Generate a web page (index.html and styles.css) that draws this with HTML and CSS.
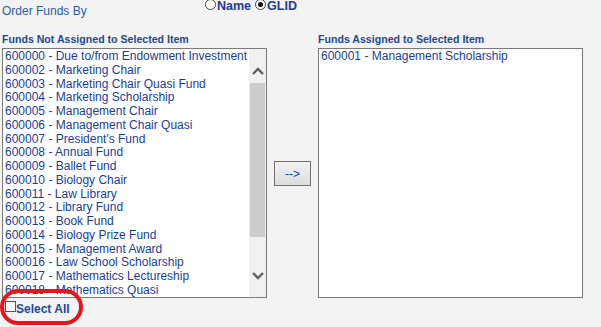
FILE: index.html
```
<!DOCTYPE html>
<html lang="en">

<head>
    <meta charset="UTF-8">
    <title>Fund Assignment</title>
    <link rel="stylesheet" href="styles.css">
</head>

<body>
    <div class="page">
        <div class="order-row">
            <span class="order-label">Order Funds By</span>
            <span class="order-opts">
                <label class="opt"><i class="radio"></i>Name</label>
                <label class="opt"><i class="radio on"></i>GLID</label>
            </span>
        </div>

        <div class="funds">
            <!-- 未分配 -->
            <div class="col">
                <div class="col-title">Funds Not Assigned to Selected Item</div>
                <div class="listbox">
                    <ul class="options">
                        <li>600000 - Due to/from Endowment Investment</li>
                        <li>600002 - Marketing Chair</li>
                        <li>600003 - Marketing Chair Quasi Fund</li>
                        <li>600004 - Marketing Scholarship</li>
                        <li>600005 - Management Chair</li>
                        <li>600006 - Management Chair Quasi</li>
                        <li>600007 - President's Fund</li>
                        <li>600008 - Annual Fund</li>
                        <li>600009 - Ballet Fund</li>
                        <li>600010 - Biology Chair</li>
                        <li>600011 - Law Library</li>
                        <li>600012 - Library Fund</li>
                        <li>600013 - Book Fund</li>
                        <li>600014 - Biology Prize Fund</li>
                        <li>600015 - Management Award</li>
                        <li>600016 - Law School Scholarship</li>
                        <li>600017 - Mathematics Lectureship</li>
                        <li>600018 - Mathematics Quasi</li>
                        <li>600019 - Music Fund</li>
                    </ul>
                    <div class="scrollbar">
                        <div class="sb-up">
                            <svg width="12" height="8" viewBox="0 0 12 8"><polyline points="1,7 6,2 11,7" /></svg>
                        </div>
                        <div class="sb-thumb"></div>
                        <div class="sb-down">
                            <svg width="12" height="8" viewBox="0 0 12 8"><polyline points="1,1 6,6 11,1" /></svg>
                        </div>
                    </div>
                </div>
                <label class="select-all"><i class="check"></i>Select All</label>
            </div>

            <div class="mover">
                <button class="move-btn">--&gt;</button>
            </div>

            <!-- 已分配 -->
            <div class="col">
                <div class="col-title">Funds Assigned to Selected Item</div>
                <div class="listbox">
                    <ul class="options">
                        <li>600001 - Management Scholarship</li>
                    </ul>
                </div>
            </div>
        </div>

        <div class="callout"></div>
    </div>
</body>

</html>
```

FILE: styles.css
```
* {
    box-sizing: border-box;
}

html,
body {
    margin: 0;
    padding: 0;
    background: #f3f3f3;
}

body {
    font-family: "Liberation Sans", Arial, sans-serif;
    font-size: 12px;
    color: #1b3d98;
}

.page {
    position: relative;
    width: 601px;
    height: 327px;
    padding: 0 2px;
    overflow: hidden;
}

/* 排序方式 */
.order-row {
    display: flex;
    align-items: flex-start;
    height: 18px;
}

.order-label {
    width: 203px;
    padding-top: 4px;
    color: #2f5aa8;
}

.order-opts {
    display: flex;
    margin-top: -1px;
    font-size: 12.5px;
    font-weight: bold;
}

.opt {
    display: flex;
    align-items: flex-start;
    margin-right: 4px;
}

.radio {
    display: flex;
    align-items: center;
    justify-content: center;
    width: 11px;
    height: 11px;
    margin-right: 1px;
    border: 1px solid #444;
    border-radius: 50%;
    background: #fff;
}

.radio.on::after {
    content: '';
    width: 5px;
    height: 5px;
    border-radius: 50%;
    background: #111;
}

/* 两个列表 */
.funds {
    display: flex;
    margin-top: 15px;
}

.col {
    width: 265px;
}

.col-title {
    margin-bottom: 3px;
    font-size: 10.6px;
    font-weight: bold;
    line-height: 12px;
    color: #234a94;
}

.listbox {
    display: flex;
    height: 250px;
    border: 1px solid #7a7a7a;
    background: #fff;
    overflow: hidden;
}

.options {
    flex: 1;
    margin: 0;
    padding: 1px 0 0 2px;
    list-style: none;
    line-height: 13.75px;
    white-space: nowrap;
    overflow: hidden;
}

.scrollbar {
    display: flex;
    flex-direction: column;
    width: 17px;
    background: #f0f0f0;
}

.scrollbar svg {
    display: block;
    fill: none;
    stroke: #606060;
    stroke-width: 2.4;
}

.sb-up {
    display: flex;
    justify-content: center;
    height: 34px;
    padding-top: 18px;
}

.sb-thumb {
    height: 154px;
    margin: 0 1px;
    background: #cdcdcd;
}

.sb-down {
    display: flex;
    justify-content: center;
    flex: 1;
    padding-top: 35px;
}

.select-all {
    display: flex;
    align-items: flex-start;
    margin-top: 4px;
    padding-left: 3px;
    font-weight: bold;
    color: #2346a0;
}

.check {
    width: 11px;
    height: 11px;
    margin-top: -1px;
    border: 1px solid #555;
    background: #f7f7f7;
}

/* 移动按钮 */
.mover {
    width: 51px;
    padding: 128px 0 0 7px;
}

.move-btn {
    display: block;
    width: 37px;
    height: 25px;
    padding: 0;
    border: 1px solid #707070;
    background: linear-gradient(#f3f3f3, #dcdcdc);
    font-family: inherit;
    font-size: 12px;
    color: #1b3d98;
}

/* 红色标注 */
.callout {
    position: absolute;
    left: 0;
    top: 289px;
    width: 83px;
    height: 36px;
    border: 4px solid #e3161c;
    border-radius: 18px;
}
```
